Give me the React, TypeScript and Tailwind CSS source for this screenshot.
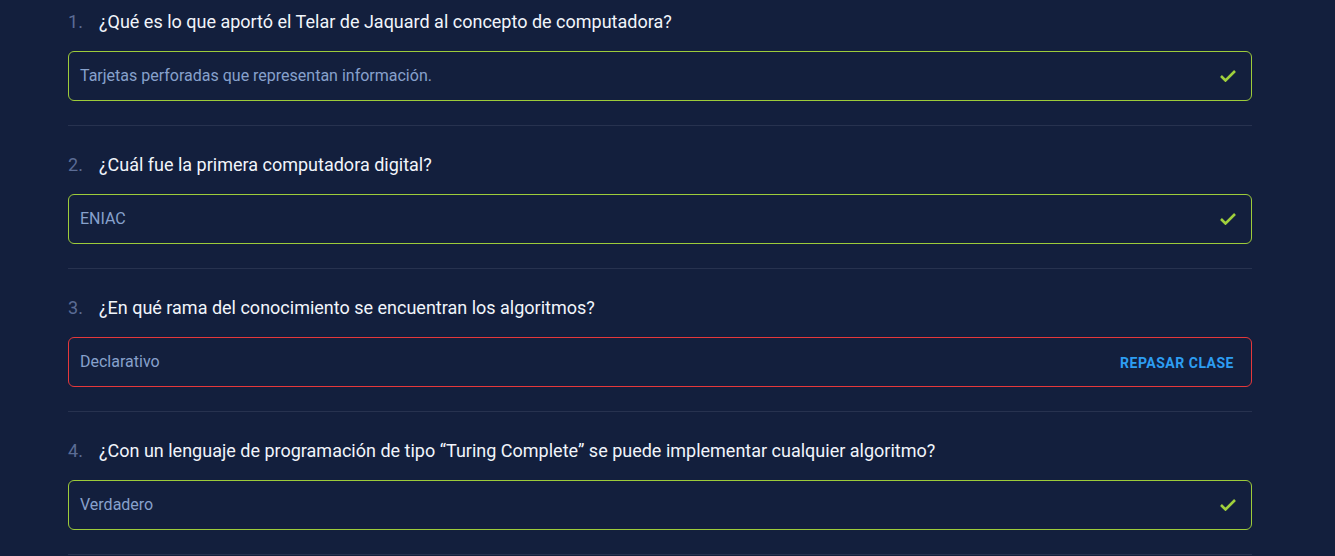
type Item = {
  q: string;
  answer: string;
  correct: boolean;
};

const items: Item[] = [
  { q: "¿Qué es lo que aportó el Telar de Jaquard al concepto de computadora?", answer: "Tarjetas perforadas que representan información.", correct: true },
  { q: "¿Cuál fue la primera computadora digital?", answer: "ENIAC", correct: true },
  { q: "¿En qué rama del conocimiento se encuentran los algoritmos?", answer: "Declarativo", correct: false },
  { q: "¿Con un lenguaje de programación de tipo “Turing Complete” se puede implementar cualquier algoritmo?", answer: "Verdadero", correct: true },
];

function CheckMark() {
  return (
    <svg width="16" height="12" viewBox="0 0 16 12" fill="none" className="text-[#a0d03c]">
      <polyline points="1,6 5.5,10.5 15,1" stroke="currentColor" strokeWidth="2.6" />
    </svg>
  );
}

export default function App() {
  return (
    <div className="h-[556px] overflow-hidden bg-[#131f3d] font-['Roboto',sans-serif]">
      <div className="mx-[68px] -mt-[17px] w-[1184px]">
        {items.map((item, i) => (
          <div key={i} className="border-b border-[#27324f] pt-[26px] pb-[24px]">
            <div className="flex h-6 items-center text-[18px]">
              <span className="w-[31px] text-[#5b6c95]">{i + 1}.</span>
              <span className="text-[#f1f5fb]">{item.q}</span>
            </div>
            <div
              className={
                "mt-[18px] flex h-[50px] items-center justify-between rounded-[6px] border pl-[11px] " +
                (item.correct ? "border-[#9dcb3a] pr-[15px]" : "border-[#e5383b] pr-[17px]")
              }
            >
              <span className="text-[16px] text-[#87a1cc]">{item.answer}</span>
              {item.correct ? (
                <CheckMark />
              ) : (
                <span className="pt-[3px] text-[14px] font-bold tracking-[0.5px] text-[#2d9df2]">REPASAR CLASE</span>
              )}
            </div>
          </div>
        ))}
      </div>
    </div>
  );
}
